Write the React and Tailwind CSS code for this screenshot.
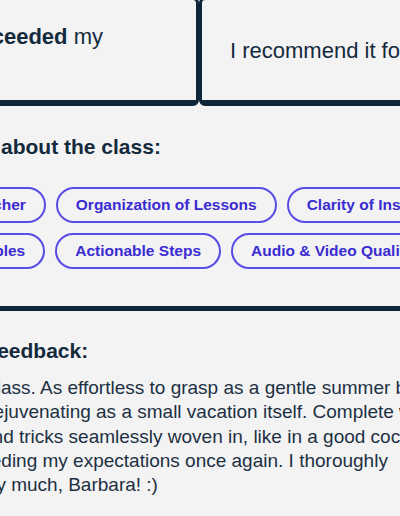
import React from 'react';

const chips = [
  'Knowledgeable Teacher',
  'Organization of Lessons',
  'Clarity of Instruction',
  'Clear, Helpful Examples',
  'Actionable Steps',
  'Audio & Video Quality',
];

const feedback = [
  'Another marvelous class. As effortless to grasp as a gentle summer breeze,',
  'and it felt nearly as rejuvenating as a small vacation itself. Complete with',
  'plenty of good tips and tricks seamlessly woven in, like in a good cocktail.',
  'Truly fantastic, exceeding my expectations once again. I thoroughly',
  'like it. Thank you very much, Barbara! :)',
];

export default function App() {
  return (
    <div className="w-[400px] h-[516px] overflow-hidden bg-[#f3f3f3] text-[#132a3d] font-['Liberation_Sans',Arial,sans-serif]">
      <div className="w-[753px] ml-[-177.5px] mt-[-3px]">
        {/* Answer cards */}
        <div className="grid grid-cols-2">
          <div className="border-[3px] border-b-[6px] border-[#0f2539] rounded-[6px] px-[28px] pt-[23px] pb-[21px] text-[22px] leading-[28px]">
            The lesson <strong className="font-bold">exceeded</strong> my expectations
          </div>
          <div className="border-[3px] border-b-[6px] border-[#0f2539] rounded-[6px] px-[28px] pt-[37px] text-[22px] leading-[28px] whitespace-nowrap">
            I recommend it for beginners
          </div>
        </div>

        <h3 className="mt-[27px] text-[21px] leading-[28px] font-bold">What did you like about the class:</h3>
        <div className="mt-[26px] ml-[7px] flex flex-wrap gap-x-[10px] gap-y-[10px]">
          {chips.map((c) => (
            <span
              key={c}
              className="h-[36px] px-[18px] flex items-center rounded-full border-2 border-[#5a4de3] text-[#3a2bd2] text-[15.5px] font-bold whitespace-nowrap"
            >
              {c}
            </span>
          ))}
        </div>

        <div className="mt-[37px] border-t-[5px] border-[#0f2539]" />

        <h3 className="mt-[26px] text-[21px] leading-[28px] font-bold">Write your class feedback:</h3>
        <p className="mt-[11px] text-[19px] leading-[24.3px] text-[#1c3043] whitespace-nowrap">
          {feedback.map((line, i) => (
            <React.Fragment key={i}>
              {line}
              {i < feedback.length - 1 && <br />}
            </React.Fragment>
          ))}
        </p>
      </div>
    </div>
  );
}
